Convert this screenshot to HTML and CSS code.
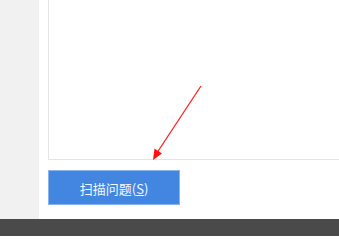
FILE: index.html
```html
<!DOCTYPE html>
<html>
<head>
<meta charset="utf-8">
<link rel="stylesheet" href="styles.css">
</head>
<body>
<div class="page">
  <div class="top">
    <div class="sidebar"></div>
    <div class="main">
      <div class="editor"></div>
      <button class="scan">扫描问题(<span class="key">S</span>)</button>
    </div>
  </div>
  <div class="taskbar"></div>
  <svg class="arrow" width="339" height="236" viewBox="0 0 339 236">
    <line x1="201" y1="86" x2="157.5" y2="152" stroke="#ff2020" stroke-width="1.3"/>
    <polygon points="153,160 154.5,148.5 162,153.5" fill="#ff1010"/>
  </svg>
</div>
</body>
</html>
```
FILE: styles.css
```css
html, body {
  margin: 0;
  padding: 0;
  width: 339px;
  height: 236px;
  overflow: hidden;
  background: #ffffff;
}
.page {
  position: relative;
  width: 339px;
  height: 236px;
  display: flex;
  flex-direction: column;
}
.top {
  display: flex;
  height: 219px;
}
.sidebar {
  width: 39px;
  background: #f1f1f1;
}
.main {
  flex: 1;
  padding-left: 9px;
  display: flex;
  flex-direction: column;
  background: #ffffff;
  overflow: hidden;
}
.editor {
  width: 320px;
  height: 160px;
  flex: none;
  border-left: 1px solid #e4e4e4;
  border-bottom: 1px solid #e4e4e4;
  box-sizing: border-box;
}
.scan {
  margin-top: 10px;
  width: 132px;
  height: 35px;
  flex: none;
  background: #4386e1;
  border: 1px solid #8ab4ee;
  color: #f4f8ff;
  font-family: "Noto Sans CJK SC", "Liberation Sans", sans-serif;
  font-size: 13px;
  padding: 0;
  padding-top: 1px;
  box-sizing: border-box;
  text-align: center;
  letter-spacing: 0;
}
.key {
  text-decoration: underline;
}
.taskbar {
  height: 17px;
  background: #4a4a4a;
}
.arrow {
  position: absolute;
  left: 0;
  top: 0;
  pointer-events: none;
}
```
